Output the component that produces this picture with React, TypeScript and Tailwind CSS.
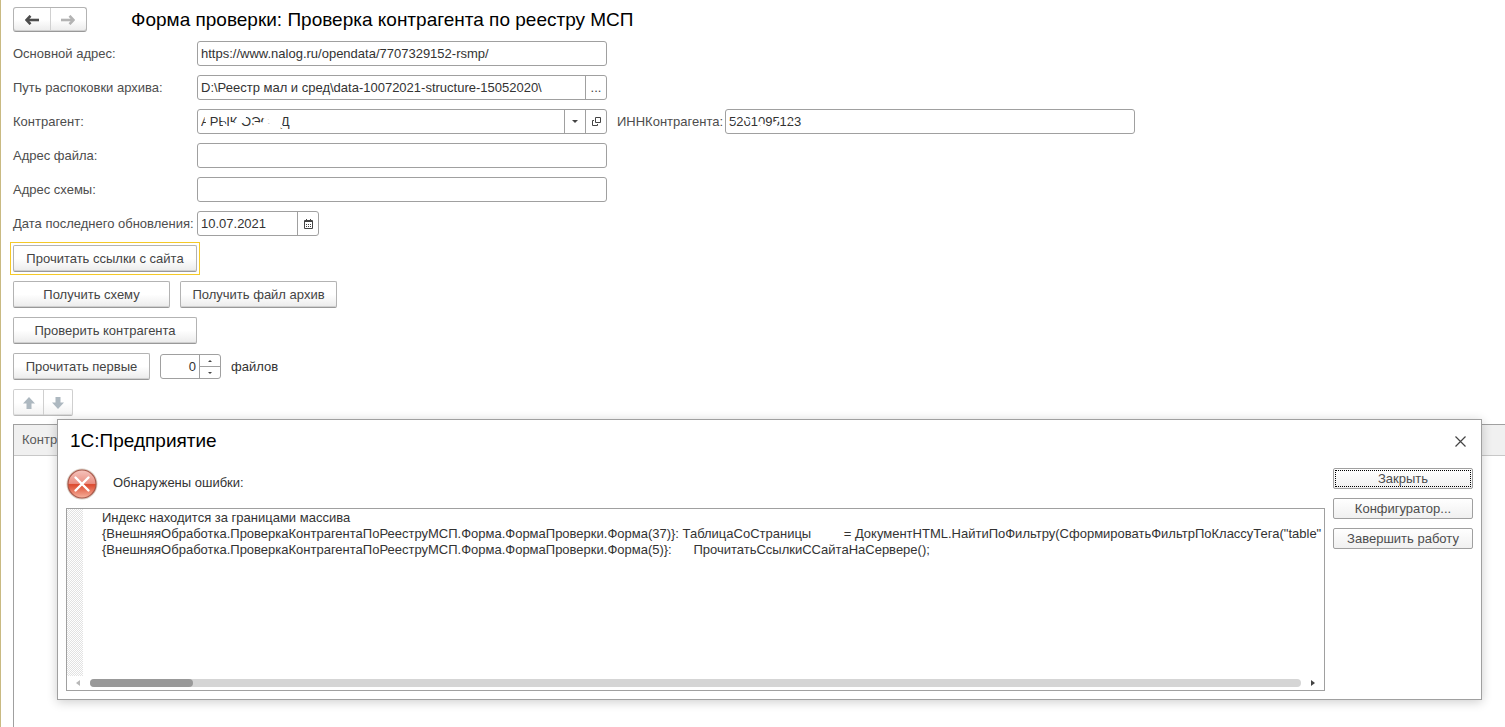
import React, { useState } from "react";

const errorLines = [
  "Индекс находится за границами массива",
  "{ВнешняяОбработка.ПроверкаКонтрагентаПоРееструМСП.Форма.ФормаПроверки.Форма(37)}: ТаблицаСоСтраницы         = ДокументHTML.НайтиПоФильтру(СформироватьФильтрПоКлассуТега(\"table\"",
  "{ВнешняяОбработка.ПроверкаКонтрагентаПоРееструМСП.Форма.ФормаПроверки.Форма(5)}:      ПрочитатьСсылкиССайтаНаСервере();",
];

const boxClass =
  "flex h-[25px] overflow-hidden rounded-[3px] border border-[#a0a0a0] bg-white";
const inputClass =
  "h-full w-full min-w-0 flex-1 bg-transparent px-[3px] text-[#333] outline-none";
const sideClass =
  "flex h-full w-[21px] shrink-0 items-center justify-center border-l border-[#a0a0a0] text-[#444]";
const labelClass = "w-[184px] shrink-0 whitespace-nowrap text-[#4d4d4d]";
const buttonClass =
  "h-[27px] rounded-[2px] border border-[#b3b3b3] border-b-[#999] bg-linear-to-b from-white from-50% to-[#ebebeb] pt-px text-center whitespace-nowrap text-[#444] shadow-[inset_0_-1px_0_#d0d0d0]";
const dialogButtonClass =
  "h-[21px] w-full rounded-[2px] border border-[#a0a0a0] bg-linear-to-b from-white to-[#f0f0f0] text-center leading-[18px] text-[#4d4d4d]";

interface FieldProps {
  id: string;
  label: string;
  value: string;
  onChange: (value: string) => void;
  children?: React.ReactNode;
  cover?: React.ReactNode;
}

const Field = ({ id, label, value, onChange, children, cover }: FieldProps) => (
  <div className="flex items-center">
    <label htmlFor={id} className={labelClass}>
      {label}
    </label>
    <div className={`${boxClass} relative w-[410px]`}>
      <input
        id={id}
        className={inputClass}
        value={value}
        onChange={(e) => onChange(e.target.value)}
      />
      {cover}
      {children}
    </div>
  </div>
);

const ArrowIcon = ({ color, flip }: { color: string; flip?: boolean }) => (
  <svg
    width="14"
    height="10"
    viewBox="0 0 14 10"
    className={flip ? "rotate-180" : ""}
    fill="none"
    stroke={color}
  >
    <path d="M2 5H14" strokeWidth="2.600" />
    <path d="M5.500 0.800L1.500 5l4 4.200" strokeWidth="2.600" />
  </svg>
);

const BlockArrow = ({ down }: { down?: boolean }) => (
  <svg
    width="12"
    height="12"
    viewBox="0 0 12 12"
    className={down ? "rotate-180" : ""}
    fill="#adb8c0"
  >
    <path d="M6 0l6 6.500H8.500V12h-5V6.500H0z" />
  </svg>
);

const ErrorIcon = () => (
  <svg width="32" height="32" viewBox="0 0 32 32">
    <defs>
      <linearGradient id="ball" x1="0" y1="0" x2="0" y2="1">
        <stop offset="0" stopColor="#f5c4bd" />
        <stop offset="0.480" stopColor="#ea8f82" />
        <stop offset="0.520" stopColor="#dc4a2e" />
        <stop offset="1" stopColor="#f6b29e" />
      </linearGradient>
    </defs>
    <circle cx="16" cy="16" r="15.500" fill="#d9cfc6" />
    <circle cx="16" cy="16" r="14" fill="url(#ball)" stroke="#a8584a" strokeWidth="1.200" />
    <path d="M9.500 9.500l13 13M22.500 9.500l-13 13" stroke="#fff" strokeWidth="2.400" strokeLinecap="round" />
  </svg>
);

const App = () => {
  const [address, setAddress] = useState("https://www.nalog.ru/opendata/7707329152-rsmp/");
  const [path, setPath] = useState("D:\\Реестр мал и сред\\data-10072021-structure-15052020\\");
  const [partner, setPartner] = useState("АРЫК ОЭС   Д");
  const [inn, setInn] = useState("5261095123");
  const [fileUrl, setFileUrl] = useState("");
  const [schemaUrl, setSchemaUrl] = useState("");
  const [date, setDate] = useState("10.07.2021");
  const [count, setCount] = useState(0);

  return (
    <div className="relative flex min-h-screen flex-col overflow-hidden border-l border-[#c9ba82] bg-white pt-[7px] pl-3 font-['Liberation_Sans',Arial,sans-serif] text-[13px] leading-4">
      <div className="flex flex-col gap-[9px]">
        <header className="flex h-[25px] items-center">
          <div className="flex h-[25px] w-[74px] rounded-[3px] border border-[#b3b3b3] border-b-[#999] bg-linear-to-b from-white from-50% to-[#ebebeb] shadow-[inset_0_-1px_0_#d0d0d0]">
            <button aria-label="Назад" className="flex flex-1 items-center justify-center border-r border-[#d0d0d0]">
              <ArrowIcon color="#4d4d4d" />
            </button>
            <button aria-label="Вперед" className="flex flex-1 items-center justify-center">
              <ArrowIcon color="#b3b3b3" flip />
            </button>
          </div>
          <h1 className="ml-11 text-[19px] leading-6 text-black">
            Форма проверки: Проверка контрагента по реестру МСП
          </h1>
        </header>

        <Field id="address" label="Основной адрес:" value={address} onChange={setAddress} />

        <Field id="path" label="Путь распоковки архива:" value={path} onChange={setPath}>
          <button aria-label="Выбрать" className={sideClass}>...</button>
        </Field>

        <div className="flex items-center">
          <Field
            id="partner"
            label="Контрагент:"
            value={partner}
            onChange={setPartner}
            cover={
              <svg className="pointer-events-none absolute top-0 left-0" width="110" height="23" viewBox="0 0 110 23" fill="none" stroke="#fff" strokeLinecap="round">
                <path d="M8 8l3 9M15 16l5-1M25 13l3 4" strokeWidth="3" />
                <path d="M33 14l8 2M46 7l-2 4M57 16l6-2 10 2" strokeWidth="4" />
                <path d="M66 7l8 2M82 14l2 3" strokeWidth="3" />
              </svg>
            }
          >
            <button aria-label="Открыть список" className={sideClass}>
              <svg width="6" height="3" viewBox="0 0 6 3" fill="#444">
                <path d="M0 0h6L3 3z" />
              </svg>
            </button>
            <button aria-label="Открыть" className={sideClass}>
              <svg width="9" height="9" viewBox="0 0 9 9" fill="none" stroke="#444">
                <path d="M3.500 0.500h5v5h-5zM2 3.500H0.500v5h5V7" />
              </svg>
            </button>
          </Field>
          <label htmlFor="inn" className="ml-[10px] w-[108px] shrink-0 whitespace-nowrap text-[#4d4d4d]">
            ИННКонтрагента:
          </label>
          <div className={`${boxClass} relative w-[410px]`}>
            <input id="inn" className={inputClass} value={inn} onChange={(e) => setInn(e.target.value)} />
            <svg className="pointer-events-none absolute top-0 left-0" width="80" height="23" viewBox="0 0 80 23" fill="none" stroke="#fff" strokeLinecap="round">
              <path d="M18 8l4 4M33 13l5 3M47 15l3 1" strokeWidth="3" />
              <path d="M2 12h6M52 11l-1 0M68 13l-3-1" strokeWidth="2" />
            </svg>
          </div>
        </div>

        <Field id="file" label="Адрес файла:" value={fileUrl} onChange={setFileUrl} />
        <Field id="schema" label="Адрес схемы:" value={schemaUrl} onChange={setSchemaUrl} />

        <div className="flex items-center">
          <label htmlFor="date" className={labelClass}>
            Дата последнего обновления:
          </label>
          <div className={`${boxClass} w-[122px]`}>
            <input id="date" className={inputClass} value={date} onChange={(e) => setDate(e.target.value)} />
            <button aria-label="Календарь" className={sideClass}>
              <svg width="9" height="10" viewBox="0 0 9 10" fill="none" stroke="#444">
                <path d="M0.500 1.500h8v8h-8zM0 2.500h9M2.500 0v2M6.500 0v2" />
                <path d="M2 5.500h5M2 7.500h5" strokeDasharray="1 1" />
              </svg>
            </button>
          </div>
        </div>

        <div className="flex">
          <div className="-m-[3px] border border-[#f5c928] p-[2px]">
            <button className={`${buttonClass} block w-[184px]`}>Прочитать ссылки с сайта</button>
          </div>
        </div>
        <div className="flex gap-[10px]">
          <button className={`${buttonClass} w-[157px]`}>Получить схему</button>
          <button className={`${buttonClass} w-[157px]`}>Получить файл архив</button>
        </div>
        <div className="flex">
          <button className={`${buttonClass} w-[184px]`}>Проверить контрагента</button>
        </div>
        <div className="flex items-center gap-[10px]">
          <button className={`${buttonClass} w-[137px]`}>Прочитать первые</button>
          <div className={`${boxClass} w-[61px]`}>
            <input
              id="count"
              className={`${inputClass} text-right`}
              value={count}
              onChange={(e) => setCount(Number(e.target.value) || 0)}
            />
            <div className="flex w-[21px] shrink-0 flex-col border-l border-[#a0a0a0]">
              <button
                aria-label="Больше"
                onClick={() => setCount(count + 1)}
                className="flex flex-1 items-center justify-center border-b border-[#a0a0a0]"
              >
                <svg width="4" height="2" viewBox="0 0 4 2" fill="#444"><path d="M0 2h4L2 0z" /></svg>
              </button>
              <button
                aria-label="Меньше"
                onClick={() => setCount(Math.max(0, count - 1))}
                className="flex flex-1 items-center justify-center"
              >
                <svg width="4" height="2" viewBox="0 0 4 2" fill="#444"><path d="M0 0h4L2 2z" /></svg>
              </button>
            </div>
          </div>
          <label htmlFor="count" className="text-[#333]">файлов</label>
        </div>
        <div className="flex h-[27px] w-[60px] rounded-[2px] border border-[#cfcfcf] border-b-[#bbb] bg-linear-to-b from-white from-50% to-[#f2f2f2] shadow-[inset_0_-1px_0_#dedede]">
          <button aria-label="Вверх" className="flex w-[30px] items-center justify-center border-r border-[#cfcfcf]">
            <BlockArrow />
          </button>
          <button aria-label="Вниз" className="flex flex-1 items-center justify-center">
            <BlockArrow down />
          </button>
        </div>
      </div>

      <div className="mt-2 flex-1 border-t border-l border-[#a0a0a0]">
        <table className="w-full border-collapse">
          <thead>
            <tr className="h-[30px] border-b border-[#c8c8c8] bg-[#f0f0f0]">
              <th className="px-2 text-left font-normal text-[#5a5a5a]">Контр</th>
            </tr>
          </thead>
        </table>
      </div>

      <div
        role="dialog"
        aria-labelledby="dialog-title"
        className="absolute top-[419px] right-[23px] left-[56px] flex h-[281px] flex-col border border-[#a0a0a0] bg-white px-2 pb-2 shadow-[0_2px_10px_rgba(0,0,0,0.2)]"
      >
        <div className="flex h-[42px] items-center justify-between pr-[7px] pl-1">
          <h2 id="dialog-title" className="text-[19px] leading-6 text-black">1С:Предприятие</h2>
          <button aria-label="Закрыть окно">
            <svg width="11" height="11" viewBox="0 0 11 11" stroke="#444" strokeWidth="1.200">
              <path d="M0.500 0.500l10 10M10.500 0.500l-10 10" />
            </svg>
          </button>
        </div>
        <div className="flex min-h-0 flex-1 gap-2">
          <div className="flex min-w-0 flex-1 flex-col">
            <div className="flex h-[46px] items-start gap-[15px] pt-[6px]">
              <ErrorIcon />
              <p className="pt-[7px] text-[#333]">Обнаружены ошибки:</p>
            </div>
            <div className="flex min-h-0 flex-1 flex-col border border-[#a0a0a0]">
              <div className="flex min-h-0 flex-1">
                <div className="w-4 shrink-0 bg-[repeating-conic-gradient(#e2e2e2_0_25%,#fff_0_50%)] bg-size-[2px_2px]" />
                <div className="min-w-0 flex-1 overflow-hidden pt-px pl-[19px] whitespace-pre text-[#333]">
                  {errorLines.map((line) => (
                    <div key={line}>{line}</div>
                  ))}
                </div>
              </div>
              <div className="flex h-[14px] items-center pr-[9px] pl-[9px]">
                <svg width="4" height="6" viewBox="0 0 4 6" fill="#b8b8b8"><path d="M4 0v6L0 3z" /></svg>
                <div className="mx-[10px] h-2 flex-1 rounded-full bg-[#d5d5d5]">
                  <div className="h-full w-[103px] rounded-full bg-[#999]" />
                </div>
                <svg width="4" height="6" viewBox="0 0 4 6" fill="#444"><path d="M0 0v6L4 3z" /></svg>
              </div>
            </div>
          </div>
          <div className="flex w-[140px] shrink-0 flex-col gap-[9px] pt-[6px]">
            <button className={`${dialogButtonClass} outline-1 -outline-offset-3 outline-black outline-dotted`}>
              Закрыть
            </button>
            <button className={dialogButtonClass}>Конфигуратор...</button>
            <button className={dialogButtonClass}>Завершить работу</button>
          </div>
        </div>
      </div>
    </div>
  );
};

export default App;
